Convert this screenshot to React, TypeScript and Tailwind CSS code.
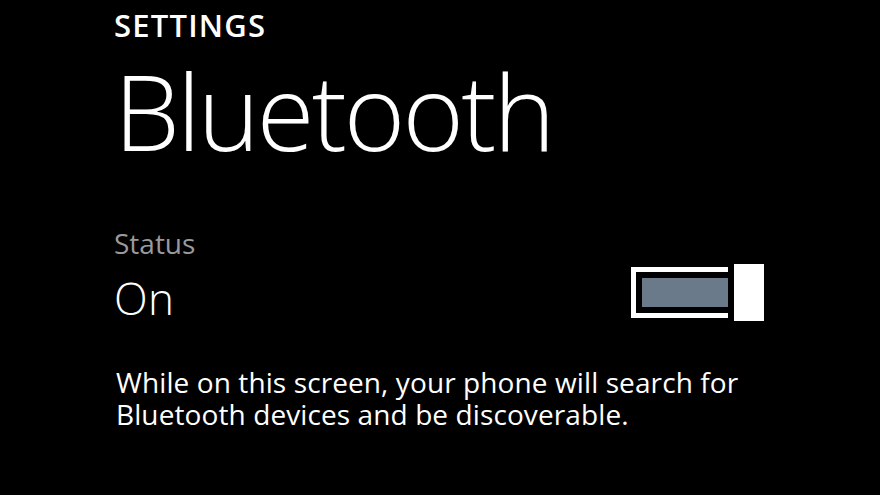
export default function App() {
  return (
    <div className="w-[880px] h-[495px] bg-black text-white overflow-hidden font-['Open_Sans',sans-serif]">
      <div className="pl-[114px] pr-[116px] pt-[10px]">
        <div className="text-[31px] leading-none font-semibold tracking-[1.2px]">SETTINGS</div>
        <h1 className="mt-[17px] text-[105px] leading-none font-light tracking-[-2.9px]">Bluetooth</h1>
        <div className="mt-[66px] flex items-start">
          <div className="flex-1">
            <div className="text-[28px] leading-none text-[#9a9a9a]">Status</div>
            <div className="mt-[19px] text-[44px] leading-none font-light tracking-[0.5px]">On</div>
          </div>
          <ToggleSwitch />
        </div>
        <p className="mt-[45px] pl-[2px] text-[28px] leading-[32px] tracking-[0.1px]">
          While on this screen, your phone will search for
          <br />
          Bluetooth devices and be discoverable.
        </p>
      </div>
    </div>
  );
}

function ToggleSwitch() {
  return (
    <div className="mt-[35px] flex items-center">
      <div className="w-[97px] h-[51px] border-[5px] border-r-0 border-white py-[6px] pl-[6px]">
        <div className="h-full bg-[#6b7a8b]"></div>
      </div>
      <div className="ml-[6px] w-[30px] h-[57px] bg-white"></div>
    </div>
  );
}
